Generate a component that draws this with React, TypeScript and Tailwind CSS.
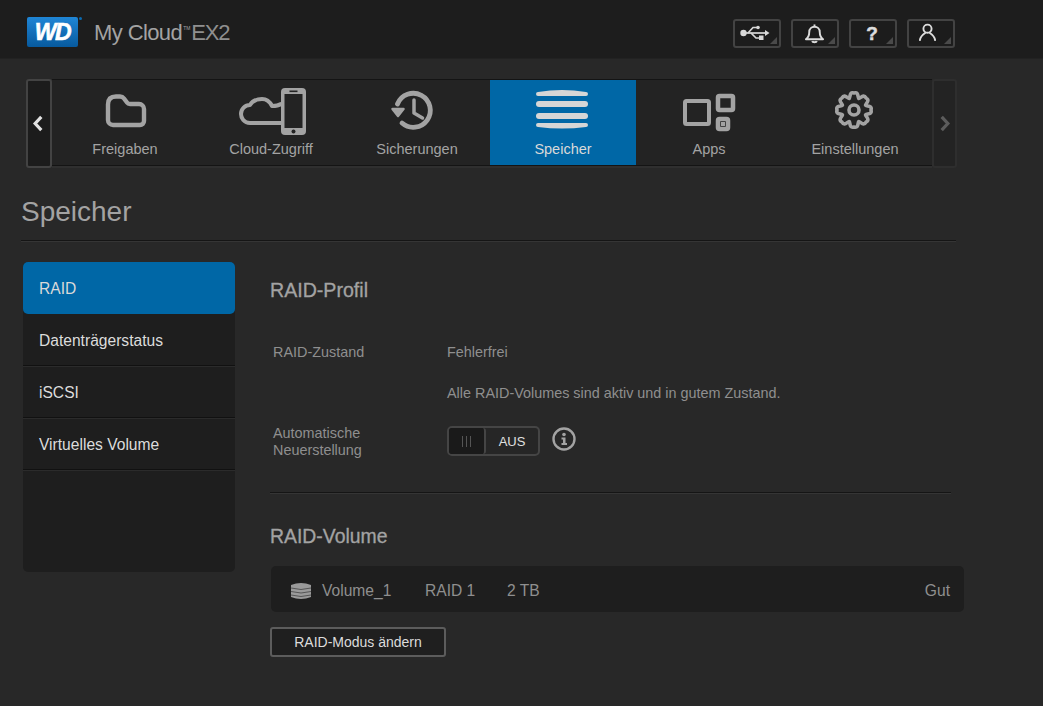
import type { ReactNode } from "react";

// 8 rounded lobes, generated rather than typed out point by point
function gearPath(cx: number, cy: number, outer: number, inner: number) {
  const teeth = 8;
  const pt = (r: number, a: number) =>
    `${(cx + r * Math.cos(a)).toFixed(2)} ${(cy + r * Math.sin(a)).toFixed(2)}`;
  let d = "";
  for (let i = 0; i < teeth; i++) {
    const step = (Math.PI * 2) / teeth;
    const a = i * step - Math.PI / 2;
    const start = pt(inner, a - step / 2);
    d += i === 0 ? `M${start} ` : "";
    d += `C${pt(inner + 1, a - step / 3)} ${pt(outer + 2, a - step / 3)} ${pt(outer, a)} `;
    d += `C${pt(outer + 2, a + step / 3)} ${pt(inner + 1, a + step / 3)} ${pt(inner, a + step / 2)} `;
  }
  return d + "Z";
}

function NavSvg({ children }: { children: ReactNode }) {
  return (
    <svg viewBox="0 0 80 60" className="h-[60px] w-[80px]" fill="none" stroke="#a3a3a3" strokeWidth="4" strokeLinecap="round" strokeLinejoin="round">
      {children}
    </svg>
  );
}

const navItems: { label: string; icon: ReactNode; active?: boolean }[] = [
  {
    label: "Freigaben",
    icon: (
      <NavSvg>
        <path d="M28 43H55a4 4 0 0 0 4-4V27a5 5 0 0 0-5-5H45q-2 0-3-1.500L39 16.500q-1.500-2-4-2H31q-8 0-8 8V38a5 5 0 0 0 5 5z" strokeWidth="4.400" />
      </NavSvg>
    ),
  },
  {
    label: "Cloud-Zugriff",
    icon: (
      <NavSvg>
        <path d="M50 41H19C13 41 10 36 10 32C10 27 14 23 19 23C22 18 27 17 31 17C36 17 39 20 41 24C44 24 47 24 50 22" />
        <rect x="50" y="6" width="25" height="47" rx="4" fill="#a3a3a3" stroke="none" />
        <rect x="53.500" y="12" width="18" height="34" fill="#232323" stroke="none" />
        <rect x="58.500" y="8.500" width="8" height="1.600" fill="#232323" stroke="none" />
        <circle cx="62.500" cy="49.500" r="2" fill="#232323" stroke="none" />
      </NavSvg>
    ),
  },
  {
    label: "Sicherungen",
    icon: (
      <NavSvg>
        <path d="M20.500 22A17 17 0 1 1 25 41" strokeWidth="4.800" />
        <path d="M15.500 27H26.500L21 34Z" fill="#a3a3a3" strokeWidth="2.500" />
        <path d="M37 18V31L45.500 36" strokeWidth="3.500" />
      </NavSvg>
    ),
  },
  {
    label: "Speicher",
    active: true,
    icon: (
      <NavSvg>
        <g fill="#d6d6d6" stroke="none">
          <path d="M15 10Q39 6 63 10a2 2 0 0 1 0 4H15a2 2 0 0 1 0-4z" />
          <rect x="13" y="19" width="52" height="6" rx="3" />
          <rect x="13" y="31" width="52" height="6" rx="3" />
          <path d="M15 41H63a2 2 0 0 1 0 4Q39 48 15 45a2 2 0 0 1 0-4z" />
        </g>
      </NavSvg>
    ),
  },
  {
    label: "Apps",
    icon: (
      <NavSvg>
        <rect x="16" y="19" width="24" height="23" rx="1.500" />
        <rect x="49" y="14" width="15" height="14" rx="1.500" strokeWidth="4.500" />
        <rect x="49" y="37" width="10" height="10" rx="1.500" strokeWidth="4.500" />
        <rect x="52" y="40" width="4" height="4" fill="#a3a3a3" stroke="none" />
      </NavSvg>
    ),
  },
  {
    label: "Einstellungen",
    icon: (
      <NavSvg>
        <path d={gearPath(39, 28, 17, 12.5)} strokeWidth="3.600" />
        <circle cx="39" cy="28" r="5" strokeWidth="3.600" />
      </NavSvg>
    ),
  },
];

function HeaderButton({ children }: { children: ReactNode }) {
  return (
    <div className="relative flex h-[29px] w-[48px] items-center justify-center rounded-[3px] border-2 border-[#434343] bg-[#1c1c1c]">
      {children}
      <svg viewBox="0 0 7 7" className="absolute bottom-[2px] right-[2px] h-[7px] w-[7px]">
        <path d="M7 0V7H0Z" fill="#4a4a4a" />
      </svg>
    </div>
  );
}

const sideItems = ["Datenträgerstatus", "iSCSI", "Virtuelles Volume"];

export default function App() {
  return (
    <div className="h-[706px] w-[1043px] overflow-hidden bg-[#282828] font-['Liberation_Sans',Arial,sans-serif]">
      {/* header */}
      <header className="flex h-[59px] items-center justify-between border-b border-[#222] bg-[#1d1d1d] pl-[27px] pr-[88px] pt-[8px]">
        <div className="mb-[2px] flex items-center">
          <div className="relative flex h-[30px] w-[51px] items-center justify-center rounded-[2px] bg-gradient-to-b from-[#1f86d6] to-[#075a9e]">
            <span className="text-[23px] font-bold italic leading-none tracking-[-1.5px] text-white [-webkit-text-stroke:0.6px_#fff]">WD</span>
            <span className="absolute right-[-4px] top-0 h-[3px] w-[3px] rounded-full bg-[#0a6ab0]" />
          </div>
          <div className="ml-[16px] text-[22px] tracking-[-0.6px] text-[#a3a3a3]">
            <span>My Cloud</span>
            <span className="ml-[1px] align-[10px] text-[5px] tracking-normal">TM</span>
            <span className="ml-[1px] tracking-[-1.2px] text-[#8f8f8f]">EX2</span>
          </div>
        </div>
        <div className="flex gap-[10px]">
          <HeaderButton>
            <svg viewBox="0 0 32 16" className="mr-[5px] h-[16px] w-[32px]" fill="none" stroke="#d8d8d8" strokeWidth="1.700">
              <circle cx="4.500" cy="8" r="3.200" fill="#d8d8d8" stroke="none" />
              <path d="M4 8H27" />
              <path d="M9 8L14 2.500H18M12 8L17 13H21" />
              <circle cx="19" cy="2.500" r="1.800" fill="#d8d8d8" stroke="none" />
              <rect x="20" y="10.500" width="4.500" height="4.500" fill="#d8d8d8" stroke="none" />
              <path d="M26 5L30.500 8L26 11Z" fill="#d8d8d8" stroke="none" />
            </svg>
          </HeaderButton>
          <HeaderButton>
            <svg viewBox="0 0 22 22" className="mr-[2px] h-[21px] w-[21px]" fill="none" stroke="#dcdcdc" strokeWidth="2" strokeLinejoin="round">
              <path d="M2 17C5 15 5.500 12 5.500 9.500C5.500 6 8 4 11 4C14 4 16.500 6 16.500 9.500C16.500 12 17 15 20 17Z" />
              <path d="M11 1.500V4" />
              <path d="M8.500 19C9 20.500 13 20.500 13.500 19" />
            </svg>
          </HeaderButton>
          <HeaderButton>
            <span className="mr-[2px] text-[19px] font-bold leading-none text-[#dcdcdc] [-webkit-text-stroke:0.5px_#dcdcdc]">?</span>
          </HeaderButton>
          <HeaderButton>
            <svg viewBox="0 0 20 20" className="mb-[2px] mr-[7px] h-[19px] w-[19px]" fill="none" stroke="#dcdcdc" strokeWidth="2" strokeLinecap="round">
              <circle cx="10" cy="6" r="4.300" />
              <path d="M2 18C2.500 14 6 11.500 7.500 10.500M18 18C17.500 14 14 11.500 12.500 10.500" />
            </svg>
          </HeaderButton>
        </div>
      </header>

      {/* app strip */}
      <nav className="ml-[26px] mt-[20px] flex h-[89px] w-[931px]">
        <div className="flex w-[26px] items-center justify-center rounded-[3px] border-2 border-[#434343] bg-[#1c1c1c]">
          <svg viewBox="0 0 12 18" className="mr-[2px] h-[17px] w-[12px]" fill="none" stroke="#e2e2e2" strokeWidth="3.400">
            <path d="M9.500 2L3 9L9.500 16" />
          </svg>
        </div>
        <div className="flex h-[87px] w-[880px] border-y border-[#141414] bg-[#232323] shadow-[0_2px_0_#2f2f2f]">
          {navItems.map((item) => (
            <div
              key={item.label}
              className={`flex h-full w-[146px] flex-col items-center pt-[2px] ${item.active ? "bg-[#0067a6]" : ""}`}
            >
              {item.icon}
              <span className={`mt-[-1px] text-[14.5px] leading-[17px] ${item.active ? "text-[#d9d9d9]" : "text-[#a3a3a3]"}`}>
                {item.label}
              </span>
            </div>
          ))}
        </div>
        <div className="flex w-[25px] items-center justify-center rounded-[3px] border-2 border-[#2e2e2e] bg-[#232323]">
          <svg viewBox="0 0 12 18" className="ml-[1px] h-[17px] w-[12px]" fill="none" stroke="#5c5c5c" strokeWidth="3.400">
            <path d="M2.500 2L9 9L2.500 16" />
          </svg>
        </div>
      </nav>

      {/* page title */}
      <div className="ml-[21px] mt-[22px] h-[51px] w-[935px] border-b border-[#151515] shadow-[0_1px_0_#353535]">
        <h1 className="text-[28px] leading-[44px] text-[#a3a3a3]">Speicher</h1>
      </div>

      <div className="mt-[21px] flex">
        {/* side menu */}
        <aside className="ml-[23px] h-[310px] w-[212px] rounded-[5px] bg-[#1e1e1e]">
          <div className="flex h-[52px] items-center rounded-[5px] bg-[#0067a6] pl-[16px] pt-[2px] text-[15.6px] text-[#d9d9d9]">RAID</div>
          {sideItems.map((s) => (
            <div key={s} className="flex h-[52px] items-center border-b border-[#111] pl-[16px] pt-[2px] text-[15.6px] text-[#dcdcdc] shadow-[0_1px_0_#2b2b2b]">
              {s}
            </div>
          ))}
        </aside>

        {/* content */}
        <main className="ml-[35px] w-[695px]">
          <h2 className="flex h-[56px] items-center pt-[2px] text-[19.6px] text-[#a3a3a3] [-webkit-text-stroke:0.3px_#a3a3a3]">RAID-Profil</h2>

          <div className="ml-[3px] mt-[25px] flex h-[20px] items-center text-[14.4px] text-[#8f8f8f]">
            <span className="w-[174px]">RAID-Zustand</span>
            <span>Fehlerfrei</span>
          </div>
          <p className="ml-[177px] mt-[20px] text-[14.4px] leading-[20px] text-[#8f8f8f]">
            Alle RAID-Volumes sind aktiv und in gutem Zustand.
          </p>
          <div className="ml-[3px] mt-[21px] flex text-[14.4px] leading-[17px] text-[#8f8f8f]">
            <span className="mt-[1px] w-[174px]">
              Automatische
              <br />
              Neuerstellung
            </span>
            <div className="mt-[2px] flex h-[30px] w-[93px] items-center rounded-[5px] border-2 border-[#454545] bg-[#262626]">
              <div className="flex h-[26px] w-[37px] items-center justify-center gap-[3px] rounded-[3px] border-r-2 border-[#454545] bg-[#1a1a1a]">
                <span className="h-[11px] w-px bg-[#555]" />
                <span className="h-[11px] w-px bg-[#555]" />
                <span className="h-[11px] w-px bg-[#555]" />
              </div>
              <span className="flex-1 text-center text-[13px] text-[#e0e0e0]">AUS</span>
            </div>
            <svg viewBox="0 0 24 24" className="ml-[12px] mt-[3px] h-[24px] w-[24px]">
              <circle cx="12" cy="12" r="10.500" fill="none" stroke="#a3a3a3" strokeWidth="2.400" />
              <circle cx="12" cy="7.500" r="1.800" fill="#a3a3a3" />
              <path d="M9.500 10.500H13.500V16H15V18H9.500V16H11V12.500H9.500Z" fill="#a3a3a3" />
            </svg>
          </div>

          <div className="mt-[33px] h-px w-[681px] bg-[#151515] shadow-[0_1px_0_#353535]" />

          <h2 className="mt-[28px] flex h-[30px] items-center pt-[2px] text-[19.4px] text-[#a3a3a3] [-webkit-text-stroke:0.3px_#a3a3a3]">RAID-Volume</h2>

          <div className="ml-[1px] mt-[15px] flex h-[46px] w-[693px] items-center rounded-[5px] bg-[#1e1e1e] pl-[20px] pr-[14px] pt-[3px] text-[15.6px] text-[#8f8f8f]">
            <svg viewBox="0 0 20 18" className="mt-[1px] h-[18px] w-[20px]">
              <path d="M0 3Q10 -1 20 3V15Q10 19 0 15Z" fill="#9a9a9a" />
              <path d="M0 6Q10 9 20 6M0 9.500Q10 12.500 20 9.500M0 13Q10 16 20 13" fill="none" stroke="#555" strokeWidth="1" />
            </svg>
            <span className="ml-[11px] w-[103px]">Volume_1</span>
            <span className="w-[82px]">RAID 1</span>
            <span>2 TB</span>
            <span className="ml-auto">Gut</span>
          </div>

          <button
            type="button"
            className="mt-[15px] flex h-[30px] w-[176px] items-center justify-center rounded-[3px] border-2 border-[#5c5c5c] bg-[#1f1f1f] text-[14px] text-[#dcdcdc]"
          >
            RAID-Modus ändern
          </button>
        </main>
      </div>
    </div>
  );
}
